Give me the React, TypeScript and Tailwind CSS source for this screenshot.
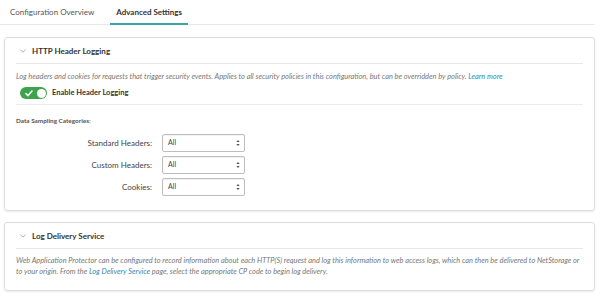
import { ChevronDown } from "lucide-react";

const font = { fontFamily: "Lato, 'Open Sans', sans-serif" };

function Toggle() {
  return (
    <div className="relative flex h-[12px] w-[27px] items-center rounded-full bg-[#3fa34d]">
      <svg className="ml-[5px]" width="8" height="7" viewBox="0 0 8 7">
        <path d="M1 3.6 L3 5.6 L7 1" fill="none" stroke="white" strokeWidth="1.5" strokeLinecap="round" />
      </svg>
      <div className="absolute right-[1.5px] top-[1.5px] h-[9px] w-[9px] rounded-full bg-white" />
    </div>
  );
}

function SelectRow({ label }: { label: string }) {
  return (
    <div className="flex items-center">
      <span className="w-[136px] text-right text-[8px] text-[#444]">{label}</span>
      <div className="ml-[10px] flex h-[18px] w-[83px] items-center justify-between rounded-[2px] border border-[#bdbdbd] bg-white pl-[5px] pr-[4px] shadow-[inset_0_1px_1px_rgba(0,0,0,0.06)]">
        <span className="text-[7px] text-[#444]">All</span>
        <svg width="4" height="8" viewBox="0 0 4 8">
          <path d="M0.3 3 L2 1 L3.7 3 Z M0.3 5 L2 7 L3.7 5 Z" fill="#555" />
        </svg>
      </div>
    </div>
  );
}

function CardHeader({ title }: { title: string }) {
  return (
    <div className="flex h-[26px] items-center border-b border-[#e8e8e8] pl-[2px]">
      <ChevronDown className="h-[10px] w-[10px] text-[#777]" strokeWidth={1.4} />
      <span className="ml-[4px] text-[8px] font-bold text-[#333]">{title}</span>
    </div>
  );
}

export default function App() {
  return (
    <div className="h-[296px] w-[600px] overflow-hidden bg-white" style={font}>
      {/* Tabs */}
      <div className="mr-[5px] flex h-[25px] items-end border-b border-[#e8e8e8]">
        <div className="flex h-full items-center pl-[10px] pr-[16px] text-[8px] text-[#555]">Configuration Overview</div>
        <div className="-mb-px flex h-full items-center border-b-2 border-[#3aa6a6] px-[6px] text-[8px] font-bold text-[#333]">
          Advanced Settings
        </div>
      </div>

      <div className="pl-[4px] pr-[5px]">
        {/* HTTP Header Logging */}
        <div className="mt-[12px] h-[174px] rounded-[3px] border border-[#dcdcdc] px-[11px] shadow-[0_1px_2px_rgba(0,0,0,0.08)]">
          <CardHeader title="HTTP Header Logging" />
          <p className="mt-[8px] text-[7.4px] italic leading-[10px] text-[#777]">
            Log headers and cookies for requests that trigger security events. Applies to all security policies in this configuration, but can be overridden by policy.{" "}
            <span className="text-[#2c8cb4]">Learn more</span>
          </p>
          <div className="flex h-[23px] items-center border-b border-[#ececec] pl-[4px]">
            <Toggle />
            <span className="ml-[5px] text-[7.5px] font-bold text-[#333]">Enable Header Logging</span>
          </div>
          <div className="mt-[11px] text-[6.4px] font-bold text-[#555]">Data Sampling Categories:</div>
          <div className="mt-[8px] flex flex-col gap-[4px]">
            <SelectRow label="Standard Headers:" />
            <SelectRow label="Custom Headers:" />
            <SelectRow label="Cookies:" />
          </div>
        </div>

        {/* Log Delivery Service */}
        <div className="mt-[11px] h-[69px] rounded-[3px] border border-[#dcdcdc] px-[11px] shadow-[0_1px_2px_rgba(0,0,0,0.08)]">
          <CardHeader title="Log Delivery Service" />
          <p className="mt-[7px] text-[7.4px] italic leading-[10.5px] text-[#777]">
            Web Application Protector can be configured to record information about each HTTP(S) request and log this information to web access logs, which can then be delivered to NetStorage or to your origin. From the{" "}
            <span className="text-[#2c8cb4]">Log Delivery Service</span> page, select the appropriate CP code to begin log delivery.
          </p>
        </div>
      </div>
    </div>
  );
}
